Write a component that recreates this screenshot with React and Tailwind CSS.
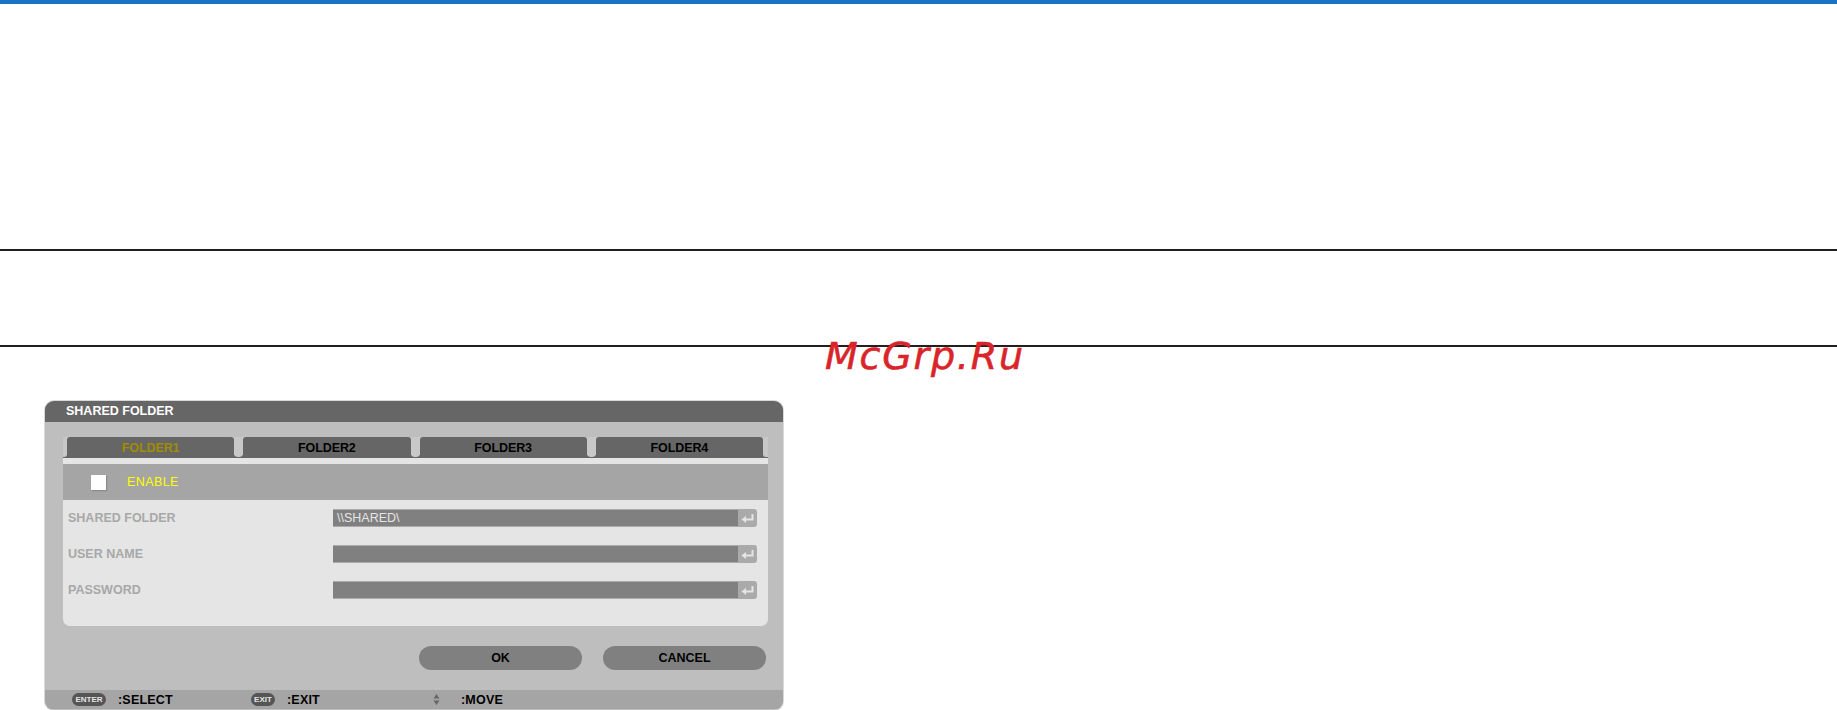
import React from "react";

const tabs = ["FOLDER1", "FOLDER2", "FOLDER3", "FOLDER4"];

const fields = [
  { label: "SHARED FOLDER", value: "\\\\SHARED\\" },
  { label: "USER NAME", value: "" },
  { label: "PASSWORD", value: "" },
];

const EnterIcon = () => (
  <svg width="13" height="9" viewBox="0 0 13 9" fill="none">
    <path d="M11.5 0V5.5H3.5" stroke="#e5e5e5" strokeWidth="2" />
    <path d="M0.5 5.5L5 2V9Z" fill="#e5e5e5" />
  </svg>
);

const Field = ({ label, value }) => (
  <div className="flex h-[18px] items-center">
    <div className="ml-[5px] w-[265px] pt-px text-[12.5px] font-bold text-[#a8a8a8]">{label}</div>
    <div className="flex h-[18px] w-[405px] items-center border-y border-[#aaaaaa] bg-[#808080] pl-[4px] text-[12.5px] text-[#e5e5e5]">
      {value}
    </div>
    <div className="flex h-[18px] w-[19px] items-center justify-center rounded-r-[3px] bg-[#aaaaaa]">
      <EnterIcon />
    </div>
  </div>
);

const App = () => {
  return (
    <div className="relative h-[710px] overflow-hidden bg-white font-['Liberation_Sans',sans-serif]">
      <div className="h-1 bg-[#1a73c4]"></div>
      <div className="mt-[245px] h-[2px] bg-[#231f20]"></div>
      <div className="mt-[94px] h-[2px] bg-[#231f20]"></div>

      <div className="mt-[54px] ml-[45px] h-[309px] w-[738px] overflow-hidden rounded-[9px] bg-[#bebebe] ring-1 ring-[#d8d8d8]">
        <div className="flex h-[21px] items-center bg-[#666666] pb-px pl-[21px] text-[12.5px] font-bold text-white">
          SHARED FOLDER
        </div>

        <div className="mt-[15px] ml-[18px] w-[705px] overflow-hidden rounded-b-[7px] bg-[#e5e5e5]">
          <div className="flex h-[21px] bg-linear-to-b from-[#c8c8c8] from-[18px] to-[#666666] to-[18px]">
            <div className="h-[20px] w-[4px] rounded-br-[3px] bg-[#c8c8c8]"></div>
            {tabs.map((tab, i) => (
              <React.Fragment key={tab}>
                <div
                  className={`flex h-[21px] w-[167.5px] items-center justify-center rounded-t-[3px] bg-[#666666] pt-px text-[12.5px] font-bold tracking-[-0.1px] ${
                    i === 0 ? "text-[#a08c00]" : "text-black"
                  }`}
                >
                  {tab}
                </div>
                {i < 3 ? <div className="h-[20px] w-[9px] rounded-b-[4px] bg-[#c8c8c8]"></div> : null}
              </React.Fragment>
            ))}
            <div className="h-[20px] w-[5px] rounded-bl-[3px] bg-[#c8c8c8]"></div>
          </div>

          <div className="mt-[6px] flex h-[36px] items-center bg-[#a5a5a5]">
            <div className="ml-[28px] h-[15px] w-[15px] bg-white shadow-[1px_1px_1px_#8a8a8a]"></div>
            <div className="ml-[21px] pt-px text-[12.5px] tracking-[0.4px] text-[#ffff00]">ENABLE</div>
          </div>

          <div className="flex h-[126px] flex-col gap-[18px] pt-[9px]">
            {fields.map((f) => (
              <Field key={f.label} label={f.label} value={f.value} />
            ))}
          </div>
        </div>

        <div className="mt-[20px] flex justify-end gap-[21px] pr-[17px]">
          <div className="flex h-[24px] w-[163px] items-center justify-center rounded-full bg-[#808080] pt-px text-[12.5px] font-bold text-black">
            OK
          </div>
          <div className="flex h-[24px] w-[163px] items-center justify-center rounded-full bg-[#808080] pt-px text-[12.5px] font-bold text-black">
            CANCEL
          </div>
        </div>

        <div className="mt-[20px] flex h-[19px] items-center bg-[#a5a5a5] text-[12.5px] font-bold tracking-[0.2px] text-black">
          <div className="ml-[27px] flex h-[13px] w-[34px] items-center justify-center rounded-full bg-[#555555] text-[8px] tracking-normal text-[#e5e5e5]">
            ENTER
          </div>
          <div className="ml-[12px] w-[133px] pt-px">:SELECT</div>
          <div className="flex h-[13px] w-[24px] items-center justify-center rounded-full bg-[#555555] text-[8px] tracking-normal text-[#e5e5e5]">
            EXIT
          </div>
          <div className="ml-[12px] w-[148px] pt-px">:EXIT</div>
          <svg width="7" height="11" viewBox="0 0 7 11" className="-ml-[2px] shrink-0">
            <path d="M3.5 0L6.5 4.5H0.5Z" fill="#666666" />
            <path d="M3.5 11L6.5 6.5H0.5Z" fill="#666666" />
          </svg>
          <div className="ml-[21px] pt-px">:MOVE</div>
        </div>
      </div>

      <div className="absolute top-[335px] left-[825px] font-['DejaVu_Sans',sans-serif] text-[38px] leading-[42px] tracking-[1.8px] text-[#d9252a] italic [-webkit-text-stroke:0.6px_#d9252a]">
        McGrp.Ru
      </div>
    </div>
  );
};

export default App;
